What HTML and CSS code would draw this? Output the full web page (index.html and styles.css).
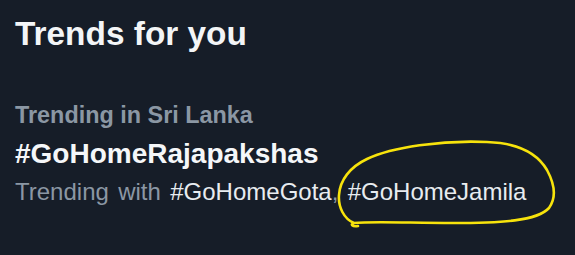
FILE: index.html
```html
<!DOCTYPE html>
<html lang="en">
<head>
    <meta charset="UTF-8">
    <meta name="viewport" content="width=device-width, initial-scale=1.0">
    <title>Trends for you</title>
    <link rel="stylesheet" href="styles.css">
</head>
<body>

<div class="trends-panel">
    <h2>Trends for you</h2>

    <div class="trend">
        <p class="trend-context">Trending in Sri Lanka</p>
        <p class="trend-name">#GoHomeRajapakshas</p>
        <p class="trend-with">Trending with <span class="tag">#GoHomeGota</span>, <span class="tag">#GoHomeJamila</span></p>

        <!-- hand drawn marker around the second tag -->
        <svg class="marker" width="235" height="100" viewBox="0 0 235 100">
            <path d="M 22 88 C 12 84, 6 72, 7 60 C 8 45, 18 32, 35 24 C 60 12, 110 5, 155 7 C 185 8, 205 18, 215 35 C 222 48, 225 62, 217 73 C 205 86, 170 88, 120 88 C 80 88, 40 86, 22 88 C 18 89, 20 92, 26 91"
                  fill="none" stroke="#f7e30c" stroke-width="2.6" stroke-linecap="round" stroke-linejoin="round"/>
        </svg>
    </div>
</div>

</body>
</html>
```

FILE: styles.css
```css
* {
    margin: 0;
    padding: 0;
    box-sizing: border-box;
}
body {
    font-family: 'Liberation Sans', Arial, sans-serif;
    background-color: #161d28;
    color: #eef1f4;
    min-height: 100vh;
}
.trends-panel {
    padding: 14px 15px;
}
h2 {
    font-size: 33.4px;
    line-height: 40px;
    font-weight: bold;
    color: #f3f5f7;
}
.trend {
    position: relative;
    margin-top: 47px;
}
.trend-context {
    font-size: 23.4px;
    line-height: 28px;
    font-weight: bold;
    color: #8b97a4;
}
.trend-name {
    margin-top: 9px;
    font-size: 28px;
    line-height: 32px;
    font-weight: bold;
    color: #f5f7f9;
}
.trend-with {
    margin-top: 7px;
    font-size: 24px;
    line-height: 30px;
    word-spacing: 2.7px;
    color: #8b97a4;
}
.tag {
    color: #e8ecf0;
}
.marker {
    position: absolute;
    left: 317px;
    top: 34px;
}
```
